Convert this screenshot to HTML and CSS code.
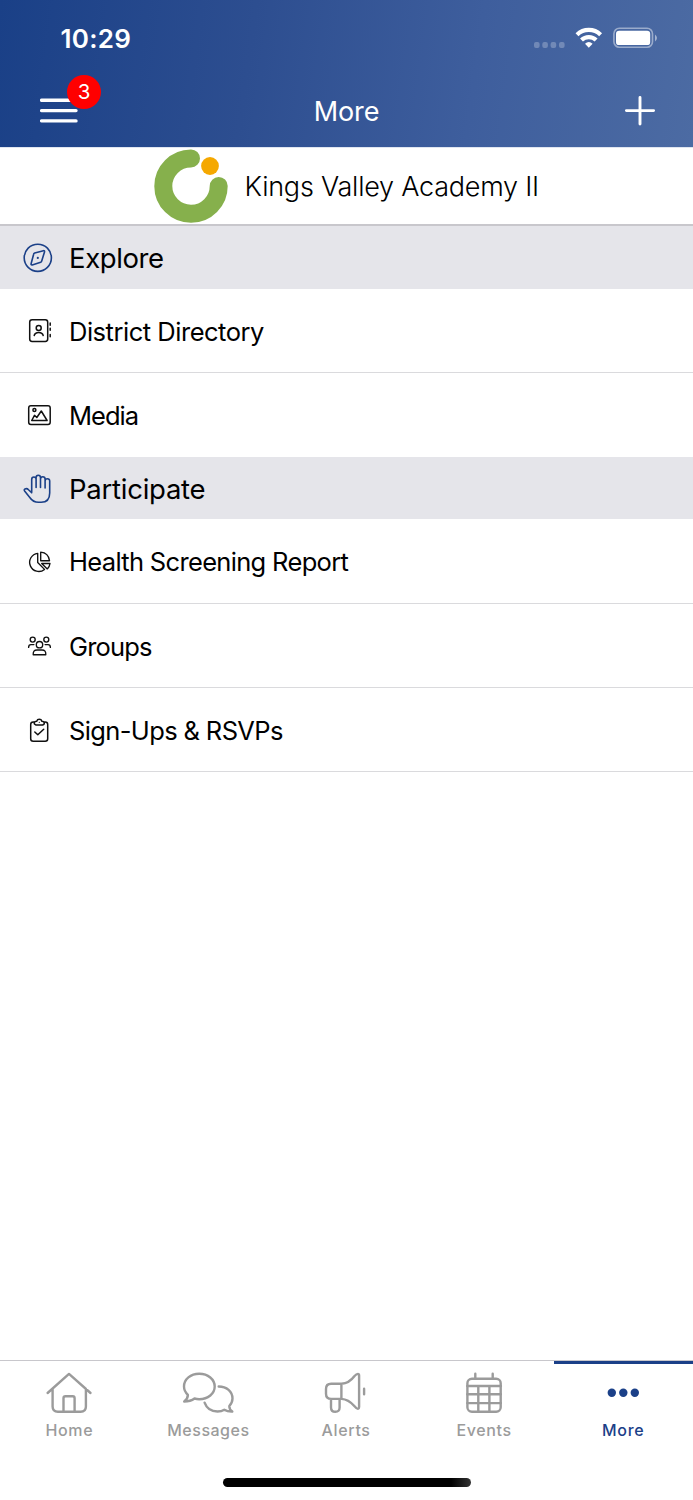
FILE: index.html
```html
<!DOCTYPE html>
<html lang="en">
<head>
<meta charset="utf-8">
<title>More</title>
<link rel="stylesheet" href="styles.css">
</head>
<body>
<div class="app">
  <header class="header">
    <div class="status">
      <span class="time">10:29</span>
      <svg class="indicators" width="128" height="28" viewBox="532 24 128 28">
        <g fill="#fff" fill-opacity=".25"><rect x="534" y="42" width="5.6" height="6" rx="2"/><rect x="542.3" y="42" width="5.6" height="6" rx="2"/><rect x="550.6" y="42" width="5.6" height="6" rx="2"/><rect x="559" y="42" width="5.6" height="6" rx="2"/></g>
        <g fill="none" stroke="#fff" stroke-width="4.2"><path d="M577 34.700A17 17 0 0 1 600.600 34.700"/><path d="M581.500 40.100A10.500 10.500 0 0 1 596.100 40.100"/></g>
        <path d="M585 43.700Q588.800 40.500 592.600 43.700L588.800 47.800Z" fill="#fff"/>
        <rect x="613.900" y="28.300" width="38.600" height="19" rx="5.500" fill="none" stroke="#fff" stroke-opacity=".45" stroke-width="1.600"/>
        <rect x="616" y="30.700" width="34.200" height="14.400" rx="3.200" fill="#fff"/>
        <path d="M655 34.500Q659 38 655 41.500Z" fill="#fff" fill-opacity=".5"/>
      </svg>
    </div>
    <div class="nav">
      <div class="menu">
        <svg width="38" height="26" viewBox="40 98 38 26"><path d="M41.600 100.300H76M41.600 110.600H76M41.600 120.900H76" stroke="#fff" stroke-width="3.400" stroke-linecap="round"/></svg>
        <span class="badge">3</span>
      </div>
      <h1 class="title">More</h1>
      <svg class="plus" width="32" height="32" viewBox="624 95 32 32"><path d="M640 97.400V124M626.400 110.600H653.600" stroke="#fff" stroke-width="2.900" stroke-linecap="round"/></svg>
    </div>
  </header>

  <div class="school">
    <svg width="76" height="76" viewBox="153 148 76 76">
      <path d="M191 158.400A27.700 27.700 0 1 0 218.700 186" fill="none" stroke="#86b04c" stroke-width="18" stroke-linecap="round"/>
      <circle cx="210" cy="166" r="8.900" fill="#f5a800"/>
    </svg>
    <span class="school-name">Kings Valley Academy II</span>
  </div>

  <main class="list">
    <h2 class="section">
      <svg class="icon" width="32" height="32" viewBox="22 242 32 32" fill="none" stroke="#1b4088" stroke-width="1.600" stroke-linejoin="round"><circle cx="37.800" cy="257.800" r="13.600"/><path d="M34.700 253.100L43.400 250.700Q44.800 250.500 44.500 251.900L41.800 260.800Q41.500 261.900 40.700 262.200L32.200 264.900Q30.800 265.200 31.100 263.800L33.500 254.700Q33.700 253.500 34.700 253.100Z"/><circle cx="37.800" cy="257.900" r="1.100" fill="#1b4088" stroke="none"/></svg>
      <span class="t-explore">Explore</span>
    </h2>
    <div class="row">
      <svg class="icon" width="32" height="32" viewBox="22 315 32 32" fill="none" stroke="#111" stroke-width="1.500" stroke-linecap="round"><rect x="29.700" y="319.800" width="18" height="21.600" rx="2.400"/><circle cx="38.700" cy="328" r="2.500"/><path d="M34.200 335.500Q34.900 332.400 38.700 332.400T43.200 335.500M50.200 322.900V325.300M50.200 328.300V330.300M50.200 334.500V336.800"/></svg>
      <span class="t-directory">District Directory</span>
    </div>
    <div class="row last-row">
      <svg class="icon" width="32" height="32" viewBox="22 399 32 32" fill="none" stroke="#111" stroke-width="1.500" stroke-linecap="round" stroke-linejoin="round"><rect x="28.700" y="405.700" width="21.500" height="18.700" rx="2.200"/><circle cx="34.400" cy="410" r="1.500"/><path d="M31.700 420.500L34.500 415.300L36.800 417.500L41.300 411L47.100 420.500Z"/></svg>
      <span class="t-media">Media</span>
    </div>
    <h2 class="section participate">
      <svg class="icon" width="32" height="32" viewBox="22 473 32 32" fill="none" stroke="#1b4088" stroke-width="1.600" stroke-linecap="round" stroke-linejoin="round"><path d="M31.700 492V479.500Q31.700 477 33.900 477T36.100 479.500V487.500M36.100 487V477.500Q36.100 475.200 38.300 475.200T40.500 477.500V487.500M40.500 479Q40.500 476.700 42.800 476.700T45.100 479V488M45.100 481Q45.100 478.800 47.400 478.800T49.700 481V493Q49.700 502.300 41.200 502.300H38.500Q33 502.300 30 497.800L24.800 491.300Q23.600 489.700 25 488.900Q27 488 28.500 489.700L31.700 492.800"/></svg>
      <span class="t-participate">Participate</span>
    </h2>
    <div class="row first-row">
      <svg class="icon" width="32" height="32" viewBox="22 546 32 32" fill="none" stroke="#111" stroke-width="1.350" stroke-linecap="round" stroke-linejoin="round"><path d="M37.700 553.300A9.100 9.100 0 1 0 44.500 569.400L37.700 562.500ZM40.700 552.200V560.700H49.500Q48.500 552.900 40.700 552.200ZM41.700 563.500H50Q49.700 566.500 47.300 568.900Z"/></svg>
      <span class="t-health">Health Screening Report</span>
    </div>
    <div class="row">
      <svg class="icon" width="32" height="32" viewBox="22 630 32 32" fill="none" stroke="#111" stroke-width="1.350" stroke-linecap="round" stroke-linejoin="round"><circle cx="32.700" cy="639.600" r="2.500"/><circle cx="46.300" cy="639.600" r="2.500"/><circle cx="39.500" cy="644.700" r="3.200"/><path d="M28.600 647.400Q28.600 644.600 31 644.600H33.900M50.400 647.400Q50.400 644.600 48 644.600H45.100M33.200 654.700Q32.900 650 37 650H42Q46.100 650 45.800 654.700Z"/></svg>
      <span class="t-groups">Groups</span>
    </div>
    <div class="row">
      <svg class="icon" width="32" height="32" viewBox="22 714 32 32" fill="none" stroke="#111" stroke-width="1.500" stroke-linecap="round" stroke-linejoin="round"><path d="M34.500 722H33.200Q30.700 722 30.700 724.500V738.800Q30.700 741.300 33.200 741.300H45.200Q47.700 741.300 47.700 738.800V724.500Q47.700 722 45.200 722H43.900M36 725H42.600Q44.700 724.400 44.200 722.500Q43.800 721.200 41.900 721.200Q41.300 719.300 39.300 719.300T36.700 721.200Q34.700 721.200 34.300 722.500Q33.900 724.400 36 725ZM34.800 732L37.800 734.800L43.700 729.300"/><circle cx="39.300" cy="722.300" r=".6" fill="#111" stroke="none"/></svg>
      <span class="t-signups">Sign-Ups &amp; RSVPs</span>
    </div>
  </main>

  <nav class="tabs">
    <div class="tab">
      <svg width="60" height="46" viewBox="39 1370 60 46" class="tab-icon"><path d="M47.600 1393L69 1373.900L90.500 1393M52.600 1389V1406.500Q52.600 1411.800 57.900 1411.800H80.600Q85.900 1411.800 85.900 1406.500V1389M63.500 1411.800V1398.200Q63.500 1396.300 65.400 1396.300H72.700Q74.600 1396.300 74.600 1398.200V1411.800"/></svg>
      <span class="l-home">Home</span>
    </div>
    <div class="tab">
      <svg width="60" height="46" viewBox="178 1370 60 46" class="tab-icon"><path d="M187.900 1394.900Q184 1391.100 184 1386.500C184 1379.300 190.600 1373.800 199.200 1373.800C208.100 1373.800 214.700 1379.300 214.700 1386.500C214.700 1393.600 208.100 1399.200 199.200 1399.200Q196.800 1399.200 194.500 1398.500Q190.500 1401.500 184.200 1401.500Q187.800 1399 187.900 1394.900ZM218.700 1386.500C226.700 1386.500 232.500 1391.700 232.500 1398.500Q232.500 1402.500 229.300 1406Q229.300 1409.500 232.300 1411.500Q227.500 1411.700 224.300 1409.700Q221.500 1411.500 217.500 1411.500Q207.700 1411.500 204.600 1402.700"/></svg>
      <span class="l-messages">Messages</span>
    </div>
    <div class="tab">
      <svg width="60" height="46" viewBox="316.300 1370 60 46" class="tab-icon"><path d="M341.700 1383.800H331.500Q326.300 1383.800 326.300 1389V1393.800Q326.300 1398.900 331.500 1398.900H341.700ZM341.700 1383.800Q349.500 1383.300 354.600 1376.300Q356.700 1373.900 358.200 1373.900Q359.400 1373.900 359.400 1375.500V1407Q359.400 1408.700 358.200 1408.900Q357 1409 354.600 1406.100Q348.800 1399.300 341.700 1398.900M331.300 1399V1407.500Q331.300 1411.800 335.600 1411.800T339.900 1407.500V1399M364.400 1388.800V1394.200"/></svg>
      <span class="l-alerts">Alerts</span>
    </div>
    <div class="tab">
      <svg width="60" height="46" viewBox="455.100 1370 60 46" class="tab-icon"><path d="M467.400 1386H501M478.400 1386V1411.500M489.500 1386V1411.500M467.400 1394.300H501M467.400 1403.100H501M475.400 1373.800V1378.500M492.800 1373.800V1378.500"/><rect x="467.500" y="1378.700" width="33.300" height="33" rx="4.500"/></svg>
      <span class="l-events">Events</span>
    </div>
    <div class="tab active">
      <svg width="60" height="46" viewBox="593.700 1370 60 46" fill="#1b4088"><circle cx="611.500" cy="1392.700" r="4.200"/><circle cx="623" cy="1392.700" r="4.200"/><circle cx="634.500" cy="1392.700" r="4.200"/></svg>
      <span class="l-more">More</span>
    </div>
  </nav>
  <div class="home-area"><div class="home-bar"></div></div>
</div>
</body>
</html>
```
FILE: styles.css
```css
* { box-sizing: border-box; }
body { margin: 0; background: #fff; font-family: Inter, "Liberation Sans", sans-serif; color: #000; }
svg { display: block; flex: none; }
span { white-space: nowrap; }
.app { width: 693px; height: 1500px; display: flex; flex-direction: column; overflow: hidden; }
.header { height: 147px; flex: none; background: linear-gradient(98deg, #1a4087 0%, #2d4e90 36%, #3e5e9d 68%, #4c6ba3 100%); color: #fff; }
.status { height: 74px; padding: 24px 33px 0 60.500px; display: flex; justify-content: space-between; align-items: flex-start; }
.time { font-size: 26px; font-weight: 600; line-height: 29px; letter-spacing: .3px; }
.nav { height: 73px; padding: 0 37px 0 40px; display: grid; grid-template-columns: 38px 1fr 32px; align-items: center; }
.menu { position: relative; }
.badge { position: absolute; left: 27.200px; top: -22.200px; width: 34px; height: 34px; border-radius: 50%; background: #f00; text-align: center; font-size: 20.500px; line-height: 34px; }
.title { margin: 0; padding: 2px 9px 0 0; font-size: 27px; line-height: 34px; font-weight: 400; text-align: center; letter-spacing: -.1px; }
.school { height: 79px; flex: none; border-top: 1px solid #dfe5f0; border-bottom: 2px solid #c8c7cc; display: flex; align-items: center; padding-left: 153px; gap: 15.500px; }
.school-name { padding-top: 2px; font-size: 27px; font-weight: 300; line-height: 36px; letter-spacing: -.24px; }
.list { flex: 1; }
.section { margin: 0; height: 63px; background: #e5e5ea; display: flex; align-items: center; gap: 15px; padding: 0 0 0 22px; font-size: 27.500px; font-weight: 400; }
.section.participate { height: 62px; padding-top: 2px; }
.row { height: 84px; border-bottom: 1px solid #dadadd; display: flex; align-items: center; gap: 15px; padding: 1px 0 0 22px; font-size: 25.500px; }
.first-row { height: 85px; }
.last-row { border-bottom-color: #fff; }
.t-explore { letter-spacing: -.4px; }
.t-participate { letter-spacing: -.25px; }
.t-directory { letter-spacing: -.48px; }
.t-media { letter-spacing: -1px; }
.t-health { letter-spacing: -.67px; }
.t-groups { letter-spacing: -.85px; }
.t-signups { letter-spacing: -.63px; }
.tabs { height: 96px; flex: none; border-top: 1.500px solid #c8c7cc; display: grid; grid-template-columns: repeat(5, 1fr); }
.tab { display: flex; flex-direction: column; align-items: center; padding-top: 9px; color: #9b9b9b; font-size: 16px; font-weight: 500; line-height: 28px; letter-spacing: .65px; }
.tab-icon { fill: none; stroke: #9b9b9b; stroke-width: 2.400px; stroke-linecap: round; stroke-linejoin: round; }
.l-messages { letter-spacing: .5px; margin-left: 1px; }
.l-alerts { margin-right: .800px; }
.l-events { margin-right: 2px; }
.l-more { margin-right: 1px; }
.tab.active { color: #1b4088; border-top: 3px solid #1b4088; padding-top: 6px; }
.home-area { height: 44px; flex: none; padding-top: 21.500px; }
.home-bar { width: 248px; height: 9px; margin: 0 auto; border-radius: 5px; background: linear-gradient(90deg, #000 92%, #333 100%); }
```
